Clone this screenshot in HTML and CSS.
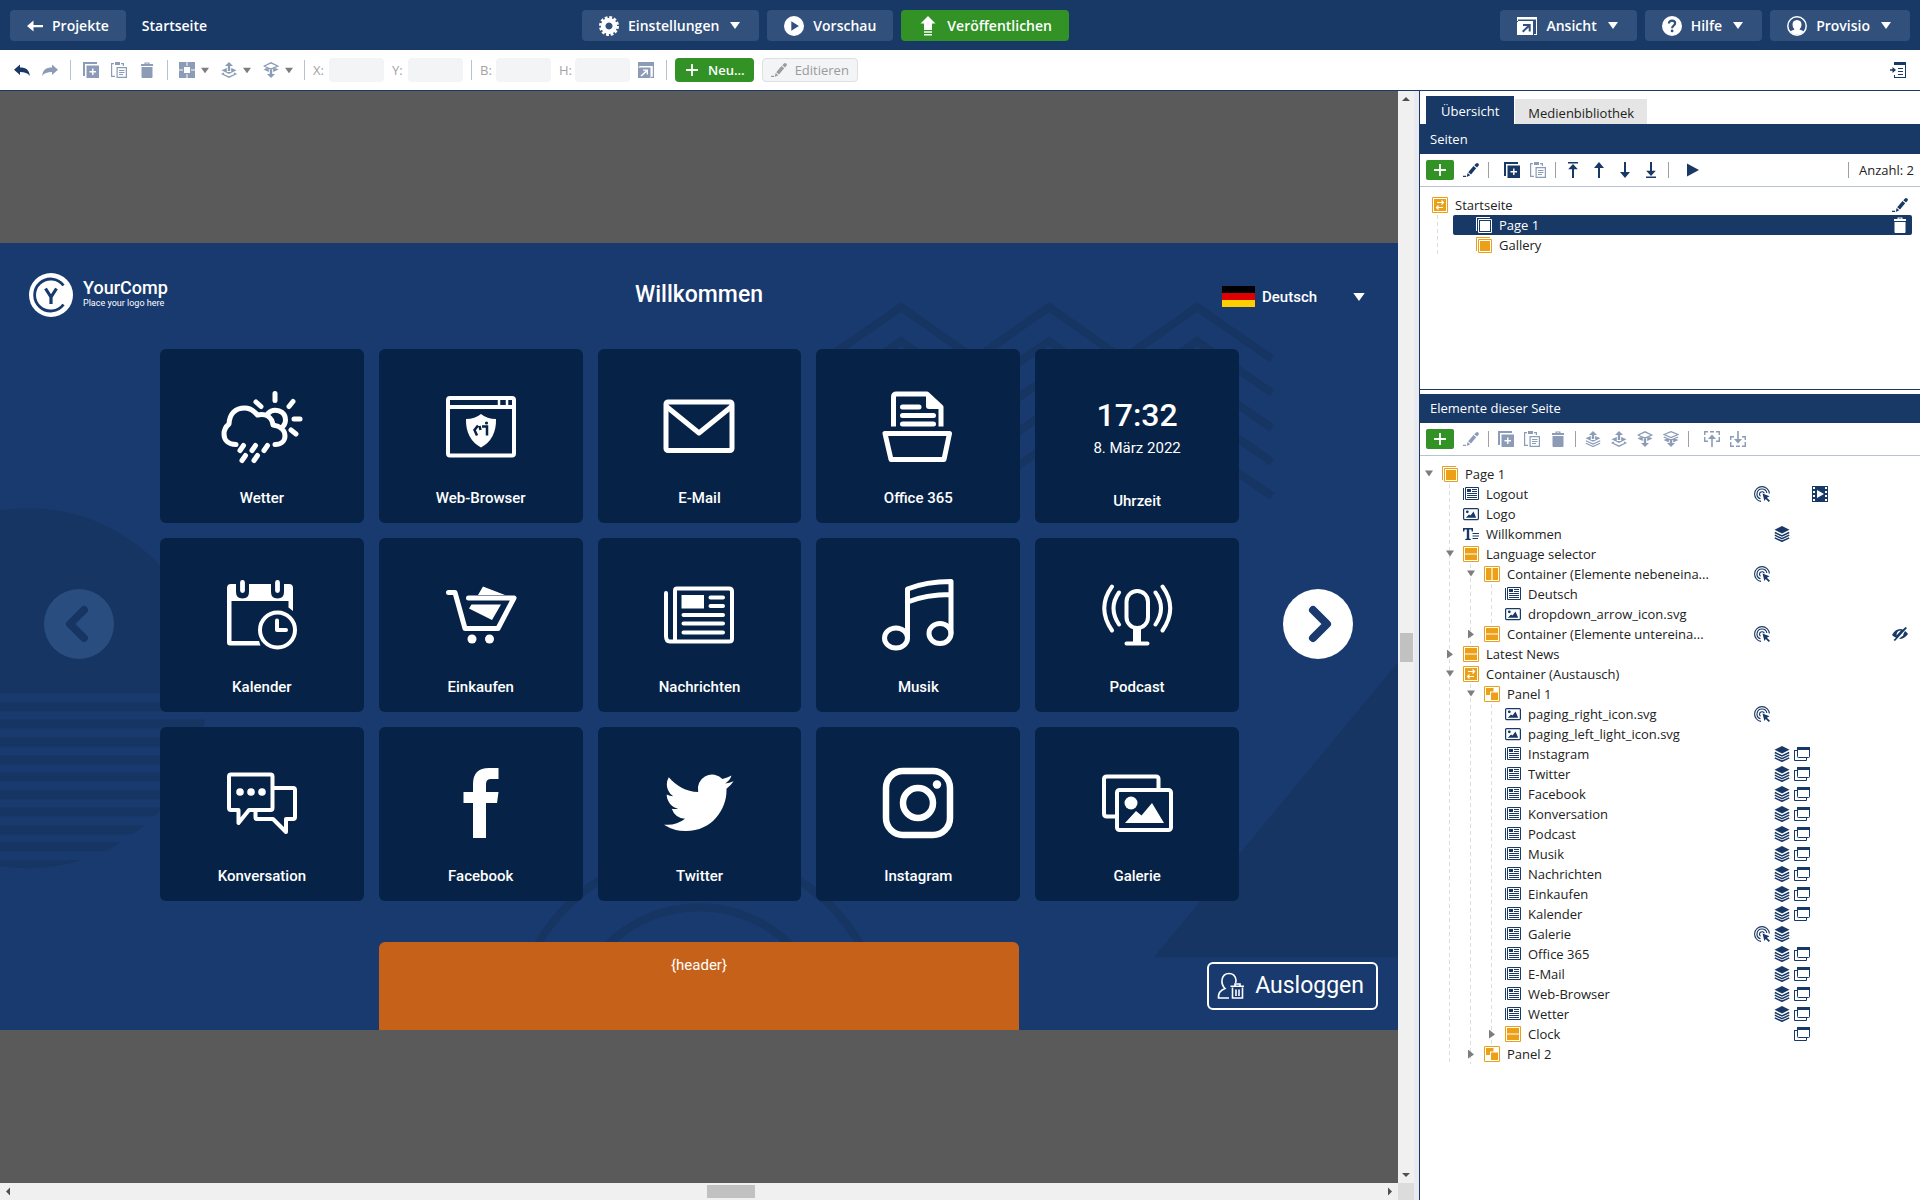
FILE: index.html
```html
<!DOCTYPE html>
<html lang="de">
<head>
<meta charset="utf-8">
<title>Startseite – Editor</title>
<link rel="stylesheet" href="styles.css">
</head>
<body>
<svg class="sprite" aria-hidden="true">
  <!-- toolbar -->
  <symbol id="undo" viewBox="0 0 16 16"><path fill="currentColor" d="M6 2.500v3c6 0 9.500 2.500 9.800 8.500-2-3-5-4-9.800-4V13L0 7.800z"/></symbol>
  <symbol id="redo" viewBox="0 0 16 16"><path fill="currentColor" d="M10 2.500v3c-6 0-9.500 2.500-9.800 8.500 2-3 5-4 9.800-4V13l6-5.200z"/></symbol>
  <symbol id="dup" viewBox="0 0 16 16"><path fill="currentColor" d="M0 0h14v2H2v12H0zM3.500 3.500H16V16H3.500z"/><path stroke="#fff" stroke-width="1.400" d="M9.800 6.500v6.500M6.500 9.800H13"/></symbol>
  <symbol id="paste" viewBox="0 0 16 16"><path fill="none" stroke="currentColor" stroke-width="1.200" d="M3 1.600H.6v12.800H4M10 1.600h2.400V4M6.100 5.600h9.300v9.800H6.100z"/><path fill="currentColor" d="M4 0h5v3H4z"/><path stroke="currentColor" d="M8 8.500h5.500M8 10.500h5.500M8 12.500h4"/></symbol>
  <symbol id="trash" viewBox="0 0 16 16"><path fill="currentColor" d="M2 2h3.500V.5h5V2H14v2H2zM6.700 1.600V2h2.600v-.4zM2.500 5h11v10q0 1-1 1h-9q-1 0-1-1z"/></symbol>
  <symbol id="align" viewBox="0 0 16 16"><path fill="currentColor" fill-rule="evenodd" d="M0 0h7v4h2V0h7v7h-4v2h4v7H9v-4H7v4H0V9h4V7H0zM5 5v6h6V5z"/><path fill="currentColor" opacity=".5" d="M7 0h2v4H7zM7 12h2v4H7zM0 7h4v2H0zM12 7h4v2h-4z"/></symbol>
  <symbol id="up1" viewBox="0 0 16 16"><path fill="currentColor" d="M8 0l4 4H9.200v5H6.800V4H4zM.5 8.300L5.800 6v4h4.400V6l5.300 2.300L8 12z"/><path fill="none" stroke="currentColor" stroke-width="1.300" d="M3 11l-1.700 1L8 15.200 14.700 12 13 11"/></symbol>
  <symbol id="up2" viewBox="0 0 16 16"><path fill="currentColor" d="M8 0l4 4H9.200v4H6.800V4H4zM.5 7.300L5.800 5v4h4.400V5l5.300 2.300L8 10.700z"/><path fill="none" stroke="currentColor" stroke-width="1.200" d="M.8 9.800L8 13l7.200-3.200M.8 12.300L8 15.500l7.200-3.200"/></symbol>
  <symbol id="down1" viewBox="0 0 16 16"><path fill="currentColor" d="M8 16l4-4H9.200V7.500H6.800V12H4zM.5 7.500l5.300 2.500V7h4.400v3l5.300-2.500L13 6.200H3z"/><path fill="none" stroke="currentColor" stroke-width="1.300" d="M3 5L1.300 4 8 .8 14.700 4 8 7 3 5"/></symbol>
  <symbol id="down2" viewBox="0 0 16 16"><path fill="currentColor" d="M8 16l4-4H9.200V9H6.800v3H4zM.5 9l5.300 2.500V9h4.400v2.500L15.500 9 13 8H3z"/><path fill="none" stroke="currentColor" stroke-width="1.200" d="M1.200 3.500L8 .6l6.800 2.900L8 6.500zM.8 6L8 9l7.200-3"/></symbol>
  <symbol id="popout" viewBox="0 0 16 16"><path fill="currentColor" fill-rule="evenodd" d="M0 0h16v16h-3v-1.200h1.800V4H1.200v1H0zM0 5.500h12.500V16H0zM5 7.500v1.300h2.700L2.500 13.500l1 1L8.700 10v2.600H10V7.500z"/></symbol>
  <symbol id="collapse" viewBox="0 0 16 16"><path fill="currentColor" fill-rule="evenodd" d="M4 0h12v16H4v-3h1v2h10V3H4zM0 7.200h2.500V5L6 8l-3.500 3V8.800H0z"/><path stroke="currentColor" d="M8 6.500h5M8 9.500h5M8 12.500h5"/></symbol>
  <symbol id="pencil" viewBox="0 0 16 16"><path fill="currentColor" d="M13 1.500q1-1 2.200 0 1.200 1 .3 2.200L14 5.500 11.300 3.200zM10.500 4l2.700 2.300L8 12.500l-2.800-2.300zM4.600 11l2.600 2.200L3.700 15zM0 13.800h3V15H0z"/></symbol>
  <symbol id="plus" viewBox="0 0 16 16"><path stroke="currentColor" stroke-width="1.800" d="M8 2v12M2 8h12"/></symbol>
  <symbol id="totop" viewBox="0 0 16 16"><path fill="currentColor" d="M3 0h10v1.600H3zM8 2l4.800 5.200H9V16H7V7.200H3.200z"/></symbol>
  <symbol id="up" viewBox="0 0 16 16"><path fill="currentColor" d="M8 0l5 6H9v10H7V6H3z"/></symbol>
  <symbol id="down" viewBox="0 0 16 16"><path fill="currentColor" d="M8 16l5-6H9V0H7v10H3z"/></symbol>
  <symbol id="tobottom" viewBox="0 0 16 16"><path fill="currentColor" d="M3 14.400h10V16H3zM8 14l4.800-5.200H9V0H7v8.800H3.200z"/></symbol>
  <symbol id="play" viewBox="0 0 16 16"><path fill="currentColor" d="M3 1.500l12 6.500-12 6.500z"/></symbol>
  <symbol id="parentup" viewBox="0 0 16 16"><path fill="none" stroke="currentColor" stroke-width="1.400" d="M4 .7H.7V4M6 .7h4M12 .7h3.300V4M.7 6v4.300H4M15.300 6v4.300H12"/><path fill="currentColor" d="M8 3.500l4 4.500H8.800v8H7.200V8H4z"/></symbol>
  <symbol id="parentdown" viewBox="0 0 16 16"><path fill="none" stroke="currentColor" stroke-width="1.400" d="M4 5.700H.7V9M12 5.700h3.300V9M.7 11v4.300H4M6 15.300h4M15.300 11v4.300H12"/><path fill="currentColor" d="M8 12.500L12 8H8.800V0H7.200v8H4z"/></symbol>
  <!-- top bar -->
  <symbol id="back" viewBox="0 0 16 16"><path fill="currentColor" d="M0 8l6.500-5.500V7H16v2.200H6.500v4.300z"/></symbol>
  <symbol id="gear" viewBox="0 0 20 20"><path fill="none" stroke="currentColor" stroke-width="4.500" d="M10 4.200a5.800 5.800 0 1 1-.01 0z"/><circle cx="10" cy="10" r="8.500" fill="none" stroke="currentColor" stroke-width="3" stroke-dasharray="2.750 1.700"/></symbol>
  <symbol id="preview" viewBox="0 0 20 20"><circle cx="10" cy="10" r="10" fill="currentColor"/><path fill="#31507b" d="M7.300 5.200l7.600 4.800-7.600 4.800z"/></symbol>
  <symbol id="publish" viewBox="0 0 20 20"><path fill="currentColor" d="M10 0l7.500 7.500H14V14H6V7.500H2.500zM6 15.200h8v1.600H6zM6 18h8v1.600H6z"/></symbol>
  <symbol id="view" viewBox="0 0 20 20"><path fill="currentColor" fill-rule="evenodd" d="M0 1h20v18h-3v-1h2V3.500H1V6H0zM0 5h16v14H0zM6 8v2h4.200L5 15l1.400 1.400 5.300-5V15.500h2V8z"/></symbol>
  <symbol id="help" viewBox="0 0 20 20"><circle cx="10" cy="10" r="10" fill="currentColor"/><path fill="none" stroke="#31507b" stroke-width="2.200" d="M6.900 7.500c0-4 6.200-3.600 6.200-.3 0 2.400-3 2.300-3 5.100"/><circle cx="10.100" cy="14.900" r="1.400" fill="#31507b"/></symbol>
  <symbol id="user" viewBox="0 0 20 20"><circle cx="10" cy="10" r="9.200" fill="none" stroke="currentColor" stroke-width="1.500"/><path fill="currentColor" d="M10 4q4.500.3 4.500 4.800 0 3-2 4.600 3 .8 4.300 2.200Q14 18.700 10 18.700T3.200 15.600Q4.500 14.200 7.500 13.400q-2-1.600-2-4.600Q5.500 4.300 10 4z"/></symbol>
  <symbol id="caret" viewBox="0 0 10 7"><path fill="currentColor" d="M0 0h10L5 7z"/></symbol>
  <!-- tree -->
  <symbol id="page" viewBox="0 0 16 16"><path fill="none" stroke="currentColor" d="M.5 14V.5H14M2.500 2.500h13v13h-13z"/><path fill="currentColor" d="M4 4h10v10H4z"/></symbol>
  <symbol id="swap" viewBox="0 0 16 16"><path fill="none" stroke="currentColor" d="M.5.5h15v15H.5z"/><path fill="currentColor" d="M2 2h12v12H2z"/><path fill="none" stroke="#fff" stroke-width="1.200" d="M5 5.500h6.500M9.500 3.500l2 2-2 2M11 10.500H4.500M6.500 8.500l-2 2 2 2"/></symbol>
  <symbol id="rows" viewBox="0 0 16 16"><path fill="none" stroke="currentColor" d="M.5.5h15v15H.5z"/><path fill="currentColor" d="M2 2h12v5.400H2zM2 8.600h12V14H2z"/></symbol>
  <symbol id="cols" viewBox="0 0 16 16"><path fill="none" stroke="currentColor" d="M.5.5h15v15H.5z"/><path fill="currentColor" d="M2 2h5.400v12H2zM8.600 2H14v12H8.600z"/></symbol>
  <symbol id="panel" viewBox="0 0 16 16"><path fill="none" stroke="currentColor" d="M.5.5h15v15H.5z"/><path fill="currentColor" d="M2 2h7.500v3.500H6V9H2zM7 6.500h7V14H7z"/></symbol>
  <symbol id="article" viewBox="0 0 16 16"><path fill="none" stroke="currentColor" d="M2.500 1.500h13v12h-13zM.5 2v12"/><path fill="currentColor" d="M4 3h4v3H4zM9 3h5v1H9zM9 5h5v1H9zM4 7h10v1H4zM4 9h10v1H4zM4 11h10v1H4z"/></symbol>
  <symbol id="image" viewBox="0 0 16 16"><rect x=".6" y="2.600" width="14.800" height="11" rx="1" fill="none" stroke="currentColor" stroke-width="1.200"/><circle cx="4.300" cy="5.800" r="1.400" fill="currentColor"/><path fill="currentColor" d="M2.800 11.800L6 8.500l1.500 1L10.500 5.500l2.700 6.300z"/></symbol>
  <symbol id="type" viewBox="0 0 16 16"><path fill="currentColor" d="M0 2h10v3.500H8.800L8.300 3.500H6.200v9l1.600.6V14H2.300v-.9l1.500-.6v-9H1.700L1.200 5.500H0z"/><path stroke="currentColor" d="M9.500 7.500H16M9.500 10H16M9.500 12.500h5.500"/></symbol>
  <symbol id="click" viewBox="0 0 16 16"><g fill="none" stroke="currentColor" stroke-width="1.100"><path d="M7 15.400A7.400 7.400 0 1 1 15.400 7.500M6.500 12.800A5 5 0 1 1 12.900 7"/><path d="M6.500 10.200A2.500 2.500 0 1 1 10.300 7.200"/></g><path fill="currentColor" d="M8.500 7.500l7 2.800-2.600 1.400 3.100 3L14.700 16l-3-3.100L10.400 15z"/></symbol>
  <symbol id="layers" viewBox="0 0 16 16"><path fill="currentColor" d="M8 0l7.500 3.800L8 7.600.5 3.800z"/><path fill="none" stroke="currentColor" stroke-width="1.500" d="M.8 6.500L8 10l7.200-3.500M.8 9.200L8 12.700l7.200-3.500M.8 11.900L8 15.300l7.200-3.400"/></symbol>
  <symbol id="windows" viewBox="0 0 16 16"><rect x="3.500" y="1.500" width="12" height="10" rx=".8" fill="none" stroke="currentColor"/><path fill="currentColor" d="M3 1h13v3H3zM0 4h3v1H0z"/><path fill="none" stroke="currentColor" d="M3 4.500H.5v10h12V12"/></symbol>
  <symbol id="film" viewBox="0 0 16 16"><path fill="currentColor" d="M0 0h16v16H0z"/><path fill="#fff" d="M1 1h2v2H1zM1 5h2v2H1zM1 9h2v2H1zM1 13h2v2H1zM13 1h2v2h-2zM13 5h2v2h-2zM13 9h2v2h-2zM13 13h2v2h-2zM5 4l7 4-7 4z"/></symbol>
  <symbol id="hidden" viewBox="0 0 16 16"><path fill="currentColor" d="M0 9Q3 3 8.500 3q1 0 2.300.4L13.500 1 15 2 3 15l-1.500-1L4 11.800Q1.500 10.800 0 9zM4.500 9.500l4.500-5Q4.500 4.500 4.500 9.500zM13 5q2 1.300 3 3-3.500 5-9 5l2-2q2.500-.5 2.700-3.500z"/></symbol>
</svg>

<header class="topbar">
  <div class="topbar-left">
    <button class="tbtn"><svg class="i16"><use href="#back"/></svg>Projekte</button>
    <h1 class="topbar-title">Startseite</h1>
  </div>
  <nav class="topbar-group">
    <button class="tbtn"><svg class="i20"><use href="#gear"/></svg>Einstellungen<svg class="tcaret"><use href="#caret"/></svg></button>
    <button class="tbtn"><svg class="i20"><use href="#preview"/></svg>Vorschau</button>
    <button class="tbtn tbtn-green"><svg class="i20"><use href="#publish"/></svg>Veröffentlichen</button>
  </nav>
  <nav class="topbar-group topbar-right">
    <button class="tbtn"><svg class="i20"><use href="#view"/></svg>Ansicht<svg class="tcaret"><use href="#caret"/></svg></button>
    <button class="tbtn"><svg class="i20"><use href="#help"/></svg>Hilfe<svg class="tcaret"><use href="#caret"/></svg></button>
    <button class="tbtn"><svg class="i20"><use href="#user"/></svg>Provisio<svg class="tcaret"><use href="#caret"/></svg></button>
  </nav>
</header>

<div class="toolbar">
  <div class="tgroup">
    <button class="ibtn" aria-label="Rückgängig"><svg class="i16"><use href="#undo"/></svg></button>
    <button class="ibtn off" aria-label="Wiederholen"><svg class="i16"><use href="#redo"/></svg></button>
  </div>
  <div class="tgroup off">
    <button class="ibtn" aria-label="Duplizieren"><svg class="i16"><use href="#dup"/></svg></button>
    <button class="ibtn" aria-label="Einfügen"><svg class="i16"><use href="#paste"/></svg></button>
    <button class="ibtn" aria-label="Löschen"><svg class="i16"><use href="#trash"/></svg></button>
  </div>
  <div class="tgroup tgroup-menus off">
    <button class="ibtn ibtn-menu" aria-label="Ausrichten"><svg class="i16"><use href="#align"/></svg><svg class="scaret"><use href="#caret"/></svg></button>
    <button class="ibtn ibtn-menu" aria-label="Nach vorne"><svg class="i16"><use href="#up1"/></svg><svg class="scaret"><use href="#caret"/></svg></button>
    <button class="ibtn ibtn-menu" aria-label="Nach hinten"><svg class="i16"><use href="#down1"/></svg><svg class="scaret"><use href="#caret"/></svg></button>
  </div>
  <div class="tgroup tgroup-fields">
    <label class="field"><span class="field-name">X:</span><input class="field-input" disabled></label>
    <label class="field"><span class="field-name">Y:</span><input class="field-input" disabled></label>
  </div>
  <div class="tgroup tgroup-fields tgroup-size">
    <label class="field"><span class="field-name">B:</span><input class="field-input" disabled></label>
    <label class="field"><span class="field-name">H:</span><input class="field-input" disabled></label>
    <button class="ibtn off" aria-label="Größe anpassen"><svg class="i16"><use href="#popout"/></svg></button>
  </div>
  <div class="tactions">
    <button class="abtn abtn-new"><svg class="i16"><use href="#plus"/></svg>Neu...</button>
    <button class="abtn abtn-edit" disabled><svg class="i16"><use href="#pencil"/></svg>Editieren</button>
  </div>
  <button class="ibtn toolbar-end" aria-label="Seitenleiste einklappen"><svg class="i16"><use href="#collapse"/></svg></button>
</div>

<div class="workspace">
  <main class="canvas">
    <section class="stage">
      <svg class="stage-bg" viewBox="0 0 1398 786" preserveAspectRatio="none" aria-hidden="true">
        <g fill="none" stroke="#173563" stroke-width="8" stroke-linecap="butt">
          <path d="M826 116l75-52 74 52 74-52 74 52 74-52 75 52"/>
          <path d="M826 150l75-52 74 52 74-52 74 52 74-52 75 52"/>
          <path d="M826 185l75-52 74 52 74-52 74 52 74-52 75 52"/>
          <path d="M826 219l75-52 74 52 74-52 74 52 74-52 75 52"/>
          <path d="M826 253l75-52 74 52 74-52 74 52 74-52 75 52"/>
          <circle cx="699" cy="794" r="130"/><circle cx="699" cy="794" r="186"/>
        </g>
        <clipPath id="disc"><circle cx="28" cy="445" r="180"/></clipPath>
        <g clip-path="url(#disc)" fill="#173563">
          <path d="M0 265h210v185H0zM0 459h210v9H0zM0 476h210v9H0zM0 494h210v9H0zM0 512h210v9H0zM0 529h210v9H0zM0 547h210v9H0zM0 564h210v9H0zM0 582h210v9H0zM0 599h210v9H0zM0 617h210v9H0z"/>
        </g>
        <path fill="#173563" d="M1154 714L1398 419V714z"/>
      </svg>

      <div class="stage-head">
        <div class="logo">
          <svg class="logo-mark" viewBox="0 0 44 44"><circle cx="22" cy="22" r="22" fill="#fff"/><path fill="none" stroke="#183a6e" stroke-width="2.800" d="M34.500 12.500A16 16 0 1 0 34.500 31.500"/><path fill="none" stroke="#183a6e" stroke-width="3.200" d="M16.500 15.500L22 24l5.500-8.500M22 23v8"/></svg>
          <div class="logo-text"><div class="logo-name">YourComp</div><div class="logo-claim">Place your logo here</div></div>
        </div>
        <h2 class="stage-title">Willkommen</h2>
        <button class="lang"><svg class="flag" viewBox="0 0 33 21"><path d="M0 0h33v7H0z"/><path fill="#d00" d="M0 7h33v7H0z"/><path fill="#ffce00" d="M0 14h33v7H0z"/></svg>Deutsch<svg class="lang-caret"><use href="#caret"/></svg></button>
      </div>

      <div class="stage-main">
        <button class="pager pager-prev" aria-label="Vorherige Seite"><svg viewBox="0 0 70 70"><path fill="none" stroke="currentColor" stroke-width="8" stroke-linecap="round" stroke-linejoin="round" d="M40 21L26 35l14 14"/></svg></button>
        <div class="tiles">
          <button class="tile"><svg class="tile-icon" viewBox="0 0 84 84"><path d="M16 60.500C8 60.500 4 56 4 50C4 45 6.500 42 9 40C9.500 30 15 24 25 24C31 24 34.500 27.500 37.500 31C46 29 52 33 53 41C60 42 65 46 65 52C65 57 61 60.500 55 60.500M48 29.500C54 23 65.500 27 65.500 36C65.500 39.500 64 42 61 44M55 9.500V16.500M73 17.500L69 22.500M74 35H80M71 46L76 50M36 18L41 22.500M23.500 61.500L20 66.500M35.500 61.500L32 66.500M47.500 61.500L44 66.500M25.500 71.500L22 76.500M37.500 71.500L34 76.500"/></svg><span>Wetter</span></button>
          <button class="tile"><svg class="tile-icon thin" viewBox="0 0 84 84"><rect x="9" y="14" width="66" height="57.500" rx="2"/><path d="M9 23H75"/><path stroke-width="2.500" d="M60 15v8M68 15v8"/><path class="solid" d="M42 30Q48 35 57 35Q57.500 55 42 63.500Q26.500 55 27 35Q36 35 42 30z"/><path stroke="#062347" stroke-width="2.500" stroke-linecap="butt" stroke-linejoin="miter" d="M38 51.500L35.500 46L39 41.500M40.500 42l1 4M43 42.500H48V51.500"/><circle cx="47.500" cy="39" r="1.600" fill="#062347" stroke="none"/></svg><span>Web-Browser</span></button>
          <button class="tile"><svg class="tile-icon" viewBox="0 0 84 84"><rect x="9" y="18" width="66" height="48.500" rx="2"/><path d="M10 23L42 49L74 23"/></svg><span>E-Mail</span></button>
          <button class="tile"><svg class="tile-icon" viewBox="0 0 84 84"><path d="M9 49.500H73.500L68 75.500H15z"/><path stroke-linecap="butt" d="M17.500 42.500V13Q17.500 10 20.500 10H51L65 23V42.500"/><path class="solid" d="M50 9.500V22Q50 25 53 25H67z"/><path d="M26.500 23H43M26.500 31.500H57.500M26.500 40H57.500"/></svg><span>Office 365</span></button>
          <button class="tile tile-clock"><time class="clock-time">17:32</time><span class="clock-date">8. März 2022</span><span>Uhrzeit</span></button>

          <button class="tile"><svg class="tile-icon thin" viewBox="0 0 84 84"><path class="solid" d="M7 15Q7 11 11 11H16V19Q16 25.500 22.500 25.500T29 19V11H51V19Q51 25.500 57.500 25.500T64 19V11H69Q73 11 73 15V38L68.500 34.500V28H11.500V68H39L40.500 72.500H10Q7 72.500 7 69.500z"/><path stroke-width="4.800" d="M22.500 9.500V17.500M57.500 9.500V17.500"/><circle cx="57.500" cy="57" r="17.500"/><path d="M57 47.500V57H66"/></svg><span>Kalender</span></button>
          <button class="tile"><svg class="tile-icon" viewBox="0 0 84 84"><path d="M9.500 19.500H16L26 55.500H59L75 25H29.500"/><path class="solid" d="M44 13.500L66 22H39zM32.500 31.500H62L53 47L30 35.500z"/><circle class="solid" cx="33" cy="66" r="4.500"/><circle class="solid" cx="50.500" cy="66" r="4.500"/></svg><span>Einkaufen</span></button>
          <button class="tile"><svg class="tile-icon thin" viewBox="0 0 84 84"><path d="M20 15.500H72Q75 15.500 75 18.500V66Q75 68.500 72 68.500H13Q9 68.500 9 63V20M18 66V17.500Q18 15.500 20 15.500"/><path class="solid" d="M24.500 22H47V35.500H24.500z"/><path d="M53.500 24.500H66M53.500 33H66M26.500 42H66M26.500 50.500H66M26.500 59.500H66"/></svg><span>Nachrichten</span></button>
          <button class="tile"><svg class="tile-icon" viewBox="0 0 84 84"><ellipse cx="20" cy="65" rx="11.500" ry="10"/><ellipse cx="64" cy="60.500" rx="11" ry="10"/><path d="M31.500 64.500V16Q50 8.500 75 8.500V60M31.500 29Q50 21.500 75 21.500"/></svg><span>Musik</span></button>
          <button class="tile"><svg class="tile-icon thin" viewBox="0 0 84 84"><rect x="31.500" y="18" width="21.500" height="37" rx="10.700"/><path d="M31.500 70.500H52.500M24 19.500Q13 35 24 51.500M60.500 19.500Q71.500 35 60.500 51.500M17 13.500Q1.500 35 17 57.500M67.500 13.500Q83 35 67.500 57.500"/><path stroke-width="8" stroke-linecap="butt" d="M42 56V70"/></svg><span>Podcast</span></button>

          <button class="tile"><svg class="tile-icon thin" viewBox="0 0 84 84"><path d="M11 12.500H50.500Q52.500 12.500 52.500 14.500V46Q52.500 48 50.500 48H29L18.500 61V48H11Q9 48 9 46V14.500Q9 12.500 11 12.500zM54 26H73Q75 26 75 28V55Q75 57 73 57H66V70L53 57H37Q35.500 57 35.500 55V49"/><g class="solid"><circle cx="20" cy="30" r="3.800"/><circle cx="31" cy="30" r="3.800"/><circle cx="42" cy="30" r="3.800"/></g></svg><span>Konversation</span></button>
          <button class="tile"><svg class="tile-icon" viewBox="0 0 84 84"><path class="solid" d="M34 76V41H24.500V30H34V22Q34 6 50 6H59.500V17H52Q47 17 47 22V30H59.500L58 41H47V76z"/></svg><span>Facebook</span></button>
          <button class="tile"><svg class="tile-icon" viewBox="0 0 84 84"><path class="solid" transform="translate(7 6) scale(2.900)" d="M23.953 4.570a10 10 0 01-2.825.775 4.958 4.958 0 002.163-2.723c-.951.555-2.005.959-3.127 1.184a4.920 4.920 0 00-8.384 4.482C7.690 8.095 4.067 6.130 1.640 3.162a4.822 4.822 0 00-.666 2.475c0 1.710.870 3.213 2.188 4.096a4.904 4.904 0 01-2.228-.616v.06a4.923 4.923 0 003.946 4.827 4.996 4.996 0 01-2.212.085 4.936 4.936 0 004.604 3.417 9.867 9.867 0 01-6.102 2.105c-.390 0-.779-.023-1.170-.067a13.995 13.995 0 007.557 2.209c9.053 0 13.998-7.496 13.998-13.985 0-.210 0-.420-.015-.630A9.935 9.935 0 0024 4.590z"/></svg><span>Twitter</span></button>
          <button class="tile"><svg class="tile-icon" viewBox="0 0 84 84"><rect x="10" y="9" width="64" height="64" rx="17" stroke-width="6.500"/><circle cx="42" cy="41" r="15" stroke-width="6.500"/><circle class="solid" cx="61" cy="22.500" r="4.200"/></svg><span>Instagram</span></button>
          <button class="tile"><svg class="tile-icon thin" viewBox="0 0 84 84"><path d="M20 54.500H12Q9 54.500 9 51.500V17Q9 14.500 12 14.500H61Q63.500 14.500 63.500 17V26"/><rect x="22" y="28" width="54" height="40" rx="2.500"/><circle class="solid" cx="36" cy="41" r="6.500"/><path class="solid" d="M30 61L41 49L46.500 53.500L57 41L69 61z"/></svg><span>Galerie</span></button>
        </div>
        <button class="pager pager-next" aria-label="Nächste Seite"><svg viewBox="0 0 70 70"><path fill="none" stroke="currentColor" stroke-width="8" stroke-linecap="round" stroke-linejoin="round" d="M30 21L44 35L30 49"/></svg></button>
      </div>

      <div class="stage-foot">
        <div class="news">{header}</div>
        <button class="logout"><svg viewBox="0 0 28 28"><g fill="none" stroke="currentColor" stroke-width="1.600"><path d="M12 26H1.500Q1 19 8 16.500Q4.500 13 5 8Q6 1.500 12 1.500T19 8Q19 10 18.500 11"/><path d="M15.500 15.500V26H25.500V15.500M13.500 14.200H27M18 13.500V12h5v1.500"/><path d="M19 17.500V24M22 17.500V24"/></g></svg>Ausloggen</button>
      </div>
    </section>
  </main>
  <div class="vscroll"><span class="arrow arrow-up"></span><span class="before"></span><span class="thumb"></span><span class="after"></span><span class="arrow arrow-down"></span></div>
  <div class="hscroll"><span class="arrow arrow-left"></span><span class="before"></span><span class="thumb"></span><span class="after"></span><span class="arrow arrow-right"></span></div>
  <div class="corner"></div>

  <aside class="side">
    <div class="tabs" role="tablist">
      <button class="tab tab-active" role="tab">Übersicht</button>
      <button class="tab" role="tab">Medienbibliothek</button>
    </div>
    <section class="pages">
      <h2 class="side-title">Seiten</h2>
      <div class="side-tools">
        <button class="add" aria-label="Seite hinzufügen"><svg class="i16"><use href="#plus"/></svg></button>
        <button class="ibtn" aria-label="Bearbeiten"><svg class="i16"><use href="#pencil"/></svg></button>
        <span class="sep sep-wide"></span>
        <button class="ibtn" aria-label="Duplizieren"><svg class="i16"><use href="#dup"/></svg></button>
        <button class="ibtn off" aria-label="Einfügen"><svg class="i16"><use href="#paste"/></svg></button>
        <span class="sep"></span>
        <button class="ibtn" aria-label="Ganz nach oben"><svg class="i16"><use href="#totop"/></svg></button>
        <button class="ibtn" aria-label="Nach oben"><svg class="i16"><use href="#up"/></svg></button>
        <button class="ibtn" aria-label="Nach unten"><svg class="i16"><use href="#down"/></svg></button>
        <button class="ibtn" aria-label="Ganz nach unten"><svg class="i16"><use href="#tobottom"/></svg></button>
        <span class="sep sep-wide"></span>
        <button class="ibtn" aria-label="Abspielen"><svg class="i16"><use href="#play"/></svg></button>
        <span class="sep sep-end"></span>
        <span>Anzahl: 2</span>
      </div>
      <ul class="ptree">
        <li>
          <div class="prow"><svg class="i16 folder"><use href="#swap"/></svg><span class="name">Startseite</span><button class="ibtn" aria-label="Startseite bearbeiten"><svg class="i16"><use href="#pencil"/></svg></button></div>
          <ul class="pchildren">
            <li><div class="prow prow-child selected"><svg class="i16"><use href="#page"/></svg><span class="name">Page 1</span><button class="ibtn" aria-label="Page 1 löschen"><svg class="i16"><use href="#trash"/></svg></button></div></li>
            <li><div class="prow prow-child"><svg class="i16 folder"><use href="#page"/></svg><span class="name">Gallery</span></div></li>
          </ul>
        </li>
      </ul>
    </section>
    <section class="elements">
      <h2 class="side-title">Elemente dieser Seite</h2>
      <div class="side-tools off">
        <button class="add" aria-label="Element hinzufügen"><svg class="i16"><use href="#plus"/></svg></button>
        <button class="ibtn" aria-label="Bearbeiten"><svg class="i16"><use href="#pencil"/></svg></button>
        <span class="sep"></span>
        <button class="ibtn" aria-label="Duplizieren"><svg class="i16"><use href="#dup"/></svg></button>
        <button class="ibtn" aria-label="Einfügen"><svg class="i16"><use href="#paste"/></svg></button>
        <button class="ibtn" aria-label="Löschen"><svg class="i16"><use href="#trash"/></svg></button>
        <span class="sep"></span>
        <button class="ibtn" aria-label="Ganz nach vorne"><svg class="i16"><use href="#up2"/></svg></button>
        <button class="ibtn" aria-label="Nach vorne"><svg class="i16"><use href="#up1"/></svg></button>
        <button class="ibtn" aria-label="Nach hinten"><svg class="i16"><use href="#down1"/></svg></button>
        <button class="ibtn" aria-label="Ganz nach hinten"><svg class="i16"><use href="#down2"/></svg></button>
        <span class="sep sep-wide"></span>
        <button class="ibtn" aria-label="Aus Container"><svg class="i16"><use href="#parentup"/></svg></button>
        <button class="ibtn" aria-label="In Container"><svg class="i16"><use href="#parentdown"/></svg></button>
      </div>
      <ul class="tree" id="element-tree"></ul>
    </section>
  </aside>
</div>
<script src="tree.js"></script>
</body>
</html>
```
FILE: tree.js
```js
// Element tree of the current page.
// [name, icon, flags, children, open]
const flagged = ['layers', 'windows'];
const article = (name, flags = flagged) => [name, 'article', flags];

const elements = [
  ['Page 1', 'page', [], [
    article('Logout', ['click', 'film']),
    ['Logo', 'image', []],
    ['Willkommen', 'type', ['layers']],
    ['Language selector', 'rows', [], [
      ['Container (Elemente nebeneina...', 'cols', ['click'], [
        article('Deutsch', []),
        ['dropdown_arrow_icon.svg', 'image', []],
      ], true],
      ['Container (Elemente untereina...', 'rows', ['click', 'hidden'], []],
    ], true],
    ['Latest News', 'rows', [], []],
    ['Container (Austausch)', 'swap', [], [
      ['Panel 1', 'panel', [], [
        ['paging_right_icon.svg', 'image', ['click']],
        ['paging_left_light_icon.svg', 'image', []],
        article('Instagram'),
        article('Twitter'),
        article('Facebook'),
        article('Konversation'),
        article('Podcast'),
        article('Musik'),
        article('Nachrichten'),
        article('Einkaufen'),
        article('Kalender'),
        article('Galerie', ['click', 'layers']),
        article('Office 365'),
        article('E-Mail'),
        article('Web-Browser'),
        article('Wetter'),
        ['Clock', 'rows', ['windows'], []],
      ], true],
      ['Panel 2', 'panel', [], []],
    ], true],
  ], true],
];

const containers = ['page', 'rows', 'cols', 'swap', 'panel'];
const svg = (id, cls = '') => `<svg class="i16 ${cls}"><use href="#${id}"/></svg>`;

function renderNode([name, icon, flags, children, open]) {
  const toggle = children
    ? `<button class="toggle ${open ? 'toggle-open' : ''}" aria-label="${name} umschalten"></button>`
    : '';
  const tone = containers.includes(icon) ? 'folder' : 'leaf';
  return `<li><div class="row"><span class="toggle-slot">${toggle}</span>${svg(icon, tone)}` +
    `<span class="name">${name}</span>` +
    `<span class="flags">${flags.map((f) => svg(f, 'flag-' + f)).join('')}</span></div>` +
    (open ? `<ul class="children">${children.map(renderNode).join('')}</ul>` : '') + '</li>';
}

document.getElementById('element-tree').innerHTML = elements.map(renderNode).join('');
```
FILE: styles.css
```css
* { box-sizing: border-box; }
body {
  margin: 0;
  min-height: 100vh;
  display: flex;
  flex-direction: column;
  font: 13px/20px "Open Sans", sans-serif;
  color: #222;
  background: #fff;
}
button, input { font: inherit; color: inherit; border: 0; padding: 0; margin: 0; background: none; }
h1, h2, ul { margin: 0; padding: 0; font: inherit; list-style: none; }
svg { display: block; flex: none; }
.sprite { position: absolute; width: 0; height: 0; }
.i16 { width: 16px; height: 16px; }
.i20 { width: 20px; height: 20px; }
.name { flex: 1; white-space: nowrap; }
.ibtn { display: flex; color: #183866; }
.off, .off .ibtn { color: #8c9bb6; }
.folder { color: #eca018; }
.leaf { color: #183866; }

/* top bar */
.topbar {
  display: flex;
  align-items: center;
  height: 50px;
  padding: 1px 10px 0;
  background: #183866;
  color: #fff;
  font-size: 14px;
  font-weight: 600;
}
.topbar-left { display: flex; align-items: center; gap: 16px; flex: 0 0 572px; }
.topbar-group { display: flex; gap: 8px; }
.topbar-right { margin-left: auto; }
.tbtn {
  display: flex;
  align-items: center;
  gap: 9px;
  height: 31px;
  padding: 0 17px;
  border-radius: 4px;
  background: #31507b;
}
.tbtn-green { background: #329225; }
.tcaret { width: 10px; height: 7px; margin: 0 2px; }

/* toolbar */
.toolbar {
  display: flex;
  align-items: center;
  height: 41px;
  padding: 0 14px 0 2px;
  border-bottom: 1px solid #183866;
}
.tgroup {
  display: flex;
  align-items: center;
  gap: 12px;
  height: 20px;
  padding: 0 12px;
  border-right: 1px solid #b8c2d0;
}
.tgroup-menus { padding: 0 11px; }
.tgroup-fields { gap: 8px; padding: 0 8px; }
.tgroup-size { padding-right: 12px; }
.ibtn-menu { align-items: center; gap: 6px; }
.scaret { width: 8px; height: 7px; color: #7d7d7d; }
.field { display: flex; align-items: center; color: #a3a3a3; }
.field-name { width: 16px; }
.field-input { width: 55px; height: 24px; border-radius: 4px; background: #f3f4f6; }
.tactions { display: flex; gap: 8px; padding-left: 8px; font-size: 13px; }
.abtn {
  display: flex;
  align-items: center;
  gap: 8px;
  height: 24px;
  padding: 0 9px;
  border-radius: 4px;
}
.abtn-new { background: #329225; color: #fff; font-weight: 600; }
.abtn-edit { background: #f3f4f6; border: 1px solid #dcdfe4; color: #9b9b9b; padding: 0 8px; }
.toolbar-end { margin-left: auto; }

/* workspace */
.workspace {
  flex: 1;
  display: grid;
  grid-template: 1fr 17px / minmax(0, 1fr) 16px 506px;
}
.canvas { display: flex; align-items: center; padding-bottom: 1px; background: #5a5a5a; }
.vscroll, .hscroll { display: flex; align-items: center; background: #f0f0f0; }
.vscroll { flex-direction: column; }
.hscroll { grid-row: 2; grid-column: 1; }
.corner { grid-row: 2; grid-column: 2; background: #dcdcdc; }
.before { flex: 52; }
.after { flex: 50; }
.hscroll .before { flex: 54; }
.hscroll .after { flex: 49; }
.thumb { background: #c1c1c1; }
.vscroll .thumb { width: 13px; height: 29px; }
.hscroll .thumb { width: 48px; height: 13px; }
.arrow { width: 16px; height: 16px; flex: none; background: #505050; }
.arrow-up { clip-path: polygon(4px 10px, 12px 10px, 8px 6px); }
.arrow-down { clip-path: polygon(4px 6px, 12px 6px, 8px 10px); }
.arrow-left { clip-path: polygon(10px 4px, 10px 12px, 6px 8px); }
.arrow-right { clip-path: polygon(6px 4px, 6px 12px, 10px 8px); }

/* stage: the edited page */
.stage {
  position: relative;
  display: flex;
  flex-direction: column;
  width: 100%;
  aspect-ratio: 16 / 9;
  background: #183a6e;
  color: #fff;
  font: 500 15px/20px Roboto, sans-serif;
}
.stage-bg { position: absolute; inset: 0; width: 100%; height: 100%; }
.stage-head, .stage-main, .stage-foot { position: relative; display: grid; }
.stage-head { grid-template-columns: 1fr auto 1fr; align-items: center; height: 106px; padding-bottom: 2px; }
.logo { display: flex; align-items: center; gap: 10px; padding-left: 29px; }
.logo-mark { width: 44px; height: 44px; }
.logo-text { padding-bottom: 4px; }
.logo-name { font-size: 18px; }
.logo-claim { font-size: 9px; font-weight: 400; line-height: 10px; }
.stage-title { font-size: 23px; font-weight: 500; line-height: 32px; }
.lang {
  display: flex;
  align-items: center;
  gap: 7px;
  width: 143px;
  padding-top: 3px;
  margin-right: 33px;
  justify-self: end;
}
.flag { width: 33px; height: 21px; }
.lang-caret { width: 12px; height: 8px; margin-left: auto; }
.stage-main { grid-template-columns: 160px 1fr 159px; align-items: center; justify-items: center; }
.tiles {
  justify-self: stretch;
  display: grid;
  grid-template-columns: repeat(5, 1fr);
  grid-auto-rows: 174px;
  gap: 15px;
}
.tile {
  display: flex;
  flex-direction: column;
  align-items: center;
  padding-top: 35px;
  border-radius: 6px;
  background: #062347;
}
.tile-icon {
  width: 84px;
  height: 84px;
  margin-bottom: 20px;
  fill: none;
  stroke: #fff;
  stroke-width: 5;
  stroke-linecap: round;
  stroke-linejoin: round;
}
.thin { stroke-width: 4; }
.solid { fill: #fff; stroke: none; }
.tile-clock { padding-top: 48px; }
.clock-time { font-size: 32px; line-height: 36px; }
.clock-date { margin: 5px 0 33px; font-weight: 400; }
.pager { width: 70px; height: 70px; margin: 0 2px 2px 0; border-radius: 50%; }
.pager-prev { background: #2a4d80; color: #173563; }
.pager-next { background: #fff; color: #183a6e; }
.stage-foot { flex: 1; grid-template-columns: 1fr 640px 1fr; padding-top: 41px; }
.news {
  grid-column: 2;
  padding-top: 13px;
  border-radius: 6px 6px 0 0;
  background: #c6611a;
  font-weight: 400;
  text-align: center;
}
.logout {
  justify-self: end;
  display: flex;
  align-items: center;
  gap: 10px;
  height: 48px;
  margin: 20px 20px 0 0;
  padding: 0 12px 0 8px;
  border: 2px solid #fff;
  border-radius: 6px;
  font-size: 23px;
  font-weight: 400;
}
.logout svg { width: 28px; height: 28px; }

/* side panel */
.side {
  grid-row: 1 / 3;
  grid-column: 3;
  border-left: 5px solid #e8eaef;
  display: flex;
  flex-direction: column;
}
.tabs, .pages, .elements { border-left: 1px solid #183866; }
.tabs { display: flex; align-items: flex-end; gap: 1px; height: 33px; padding-left: 6px; }
.tab { height: 25px; padding: 0 13px; background: #e5e5e5; line-height: 28px; }
.tab-active { height: 28px; padding: 0 15px; background: #183866; color: #fff; line-height: 30px; }
.side-title { height: 30px; padding-left: 10px; background: #183866; color: #fff; line-height: 30px; }
.side-tools {
  display: flex;
  align-items: center;
  gap: 10px;
  height: 33px;
  padding: 0 6px;
  border-bottom: 1px solid #b8c2d0;
  color: #222;
}
.add {
  display: flex;
  align-items: center;
  justify-content: center;
  width: 28px;
  height: 20px;
  margin-right: -1px;
  border-radius: 2px;
  background: #329225;
  color: #fff;
}
.sep { width: 1px; height: 16px; margin: 0 -1px; background: #a0a0a0; }
.sep-wide { margin-right: 5px; }
.sep-end { margin-left: auto; margin-right: 0; }
.pages { height: 266px; border-bottom: 1px solid #183866; }
.ptree { padding: 8px 8px 0 12px; }
.prow { display: flex; align-items: center; gap: 7px; height: 20px; padding-right: 4px; }
.prow-child { padding-left: 23px; border-radius: 2px; }
.selected, .selected .ibtn { background: #183866; color: #fff; }
.pchildren, .children {
  background: repeating-linear-gradient(#ddd 0 4px, transparent 4px 7px) 5px 0 / 1px 100% no-repeat;
}
.pchildren { padding-left: 21px; }
.elements { flex: 1; padding-top: 4px; }
.elements .side-title { height: 29px; line-height: 28px; }
.tree { padding: 8px 12px 0 1px; }
.children { margin-left: 21px; background-position: 7px 0; }
.row { display: flex; align-items: center; height: 20px; }
.row .name { padding-left: 7px; }
.toggle-slot { display: flex; width: 21px; padding-left: 4px; }
.toggle { width: 8px; height: 9px; background: #7d7d7d; clip-path: polygon(1px 0, 7px 5px, 1px 9px); }
.toggle-open { clip-path: polygon(0 1px, 8px 1px, 4px 7px); }
.flags {
  display: grid;
  grid-template-columns: 20px 20px 18px 80px 16px;
  color: #183866;
}
.flags svg { grid-row: 1; }
.flag-click { grid-column: 1; }
.flag-layers { grid-column: 2; }
.flag-windows { grid-column: 3; }
.flag-film { grid-column: 4; }
.flag-hidden { grid-column: 5; }
```
